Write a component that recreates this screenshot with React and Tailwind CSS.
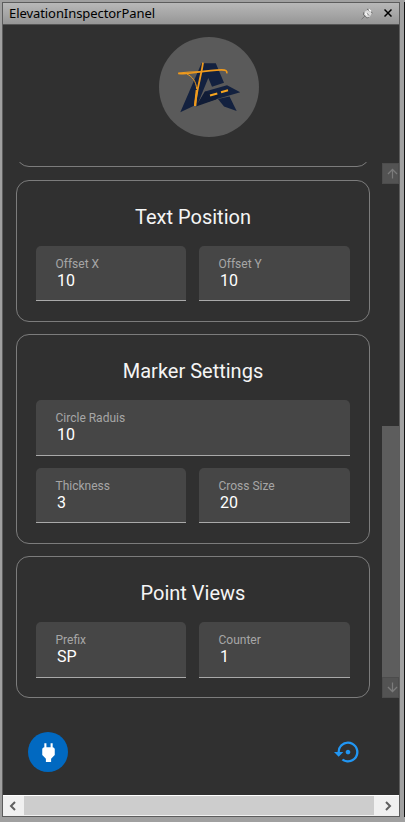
import React from 'react';
import { MdPower, MdSettingsBackupRestore, MdArrowUpward, MdArrowDownward } from 'react-icons/md';

function Field({ label, value, className = 'h-[55px]' }) {
  return (
    <label className={`flex min-w-0 flex-col rounded-t-[5px] border-b border-[#a9a9a9] bg-[#464646] pl-[19.5px] pt-[10px] ${className}`}>
      <span className="h-4 text-[12px] leading-4 text-[#a6a6a6]">{label}</span>
      <span className="pl-[1.5px] text-[16px] leading-[18px] text-white">{value}</span>
    </label>
  );
}

function Card({ title, children, className }) {
  return (
    <section className={`flex shrink-0 flex-col rounded-[13px] border border-[#7c7c7c] px-[19px] pt-[21px] ${className}`}>
      <h2 className="mb-4 h-7 text-center text-[20px] leading-[30px] text-[#f5f5f5]">{title}</h2>
      <div className="flex flex-col gap-3">{children}</div>
    </section>
  );
}

function Pair({ children }) {
  return <div className="grid grid-cols-[150px_151px] gap-[13px]">{children}</div>;
}

function Logo() {
  return (
    <div className="h-[100px] w-[100px] rounded-full bg-[#5a5a5a]">
      <svg viewBox="150 30 120 115" className="-ml-[9px] -mt-[7px] h-[115px] w-[120px] max-w-none" fill="none">
        <path d="M201.500 63.300h14.300l8.200 19.400-12 4-3.700-8.700-10.600 26L180.300 112.300z" fill="#13213f" />
        <path d="M205 91.500l22-6.200 13.300 7-23.300 6.700-20 6z" fill="#13213f" />
        <path d="M205 91.500l14 4-3 4-20 7z" fill="#101c36" />
        <path d="M218 99l11.500-2.500 7.200 14.500-12.700-4.500z" fill="#13213f" />
        <path d="M178.300 73.300c6 .8 11 .2 17-.8 10-1.500 19-2.800 26.500-2.700 4 .1 5.500 1 5 3.500" stroke="#ef9a1d" strokeWidth="1.700" />
        <path d="M178.300 73.300q10-1.800 26-1.800" stroke="#ef9a1d" strokeWidth="1.200" />
        <path d="M203 62.700C201.500 75 196.500 90 195 106" stroke="#ef9a1d" strokeWidth="1.800" />
        <path d="M196.800 90L195 106" stroke="#ef9a1d" strokeWidth="2.200" />
        <path d="M187 74c5.500 3 9 7 9.700 15" stroke="#ef9a1d" strokeWidth="1" />
        <path d="M210 95.500l7.300-2M221 92.200l7-2" stroke="#f6a51f" strokeWidth="2" />
      </svg>
    </div>
  );
}

function TitleBar() {
  return (
    <header className="flex h-[22px] shrink-0 items-center border-b border-[#555] bg-gradient-to-b from-[#b8b8b8] to-[#969696] pl-[6px] pr-[7px]">
      <span className="-mt-px flex-1 font-['Noto_Sans','Open_Sans',sans-serif] text-[13px] leading-5 tracking-[-0.07px] text-black">ElevationInspectorPanel</span>
      <svg className="mr-[11px] h-[12px] w-[12px]" viewBox="0 0 12 12" fill="none">
        <path d="M.5 11.300L4 8" stroke="#777" />
        <path d="M2.500 4l5.500 5.500-2 1-4-4z" fill="#666" />
        <path d="M4 3.500l3.500-2 3.500 3-2 4-3 1-3-3z" fill="#ddd" />
        <path d="M6 1l5.500 4M5.500 5L8 7.500" stroke="#666" />
        <path d="M8 1.500l2 2M4.500 5L6 7" stroke="#fff" strokeWidth="1.300" />
      </svg>
      <svg className="h-[8px] w-[8px] -translate-y-px" viewBox="0 0 8 8" stroke="#000" strokeWidth="1.500"><path d="M.5.5l7 7M7.500.5l-7 7" /></svg>
    </header>
  );
}

export default function App() {
  return (
    <div className="flex h-[822px] w-[405px] items-start bg-[#a0a0a0] pt-[2px] font-['Roboto',sans-serif]">
      <div className="ml-[2px] flex h-[815px] w-[398px] flex-col border border-[#5c5c5c] bg-[#303030]">
        <TitleBar />
        <div className="flex h-[137px] shrink-0 justify-center pl-[16px] pt-[12.4px]">
          <Logo />
        </div>

        <main className="flex h-[536px] shrink-0 justify-between pl-[13px]">
          <div className="flex w-[354px] flex-col overflow-hidden">
            <div className="-mt-[36px] mb-[13px] h-[41px] shrink-0 rounded-[13px] border border-[#7c7c7c]" />
            <Card title="Text Position" className="mb-[12px] h-[142px]">
              <Pair>
                <Field label="Offset X" value="10" />
                <Field label="Offset Y" value="10" />
              </Pair>
            </Card>
            <Card title="Marker Settings" className="mb-[12px] h-[210px]">
              <Field label="Circle Raduis" value="10" className="h-[56px] w-[314px]" />
              <Pair>
                <Field label="Thickness" value="3" />
                <Field label="Cross Size" value="20" />
              </Pair>
            </Card>
            <Card title="Point Views" className="h-[142px]">
              <Pair>
                <Field label="Prefix" value="SP" className="h-[56px]" />
                <Field label="Counter" value="1" className="h-[56px]" />
              </Pair>
            </Card>
          </div>

          <div className="flex w-[17px] flex-col pt-px">
            <div className="flex h-[21px] items-center justify-center border border-[#4c4c4c] bg-[#535353] pl-[3px] text-[#7b7b7b]"><MdArrowUpward size={15} className="shrink-0" /></div>
            <div className="h-[242px]" />
            <div className="h-[251px] bg-[#5d5d5d]" />
            <div className="flex h-[21px] items-center justify-center border border-[#4c4c4c] bg-[#535353] pl-[3px] text-[#7b7b7b]"><MdArrowDownward size={15} className="shrink-0" /></div>
          </div>
        </main>

        <footer className="flex min-h-0 flex-1 items-center justify-between pl-[25px] pr-[37.5px] pt-[11px]">
          <button className="flex h-10 w-10 items-center justify-center rounded-full bg-[#0169c1] text-white"><MdPower size={25} /></button>
          <button className="text-[#2196f3]"><MdSettingsBackupRestore size={28} /></button>
        </footer>

        <div className="flex h-[21px] shrink-0 border-t border-white bg-[#f0f0f0]">
          <div className="flex w-[21px] items-center justify-center pr-[2px]">
            <svg width="9" height="10" viewBox="0 0 9 10" fill="none" stroke="#5f5f5f" strokeWidth="2"><path d="M7 1L3 5l4 4" /></svg>
          </div>
          <div className="h-[19px] flex-1 bg-[#cdcdcd]" />
          <div className="flex w-[25px] items-center justify-center pl-[4px]">
            <svg width="9" height="10" viewBox="0 0 9 10" fill="none" stroke="#5f5f5f" strokeWidth="2"><path d="M2 1l4 4-4 4" /></svg>
          </div>
        </div>
      </div>
      <div className="ml-auto h-[815px] w-px bg-[#111]" />
    </div>
  );
}
